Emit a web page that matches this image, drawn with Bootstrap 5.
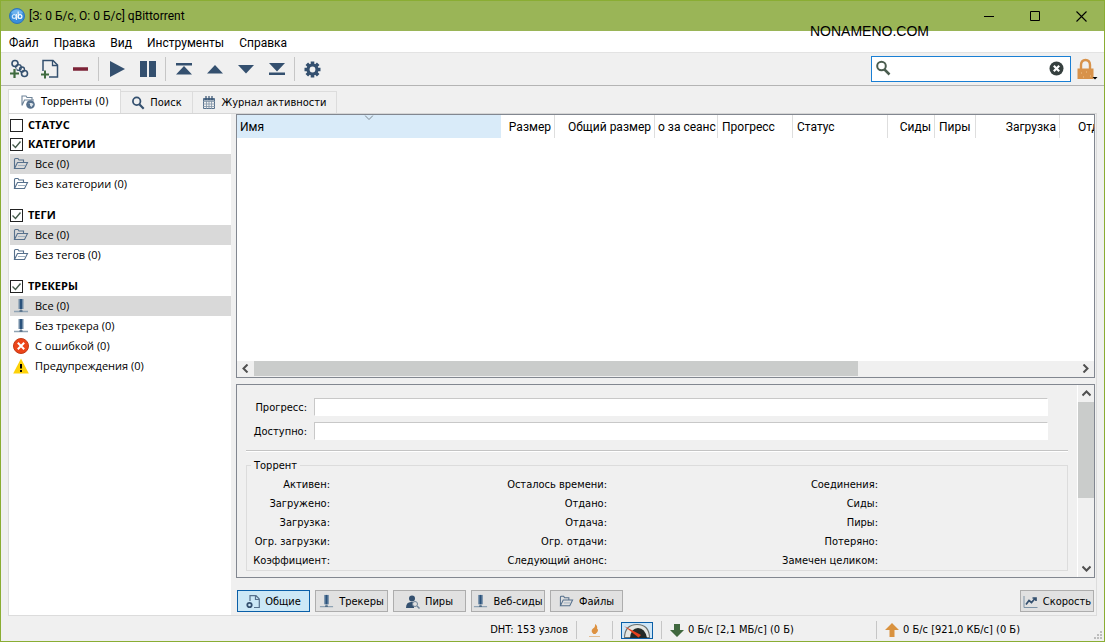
<!DOCTYPE html>
<html lang="ru">
<head>
<meta charset="utf-8">
<meta name="viewport" content="width=device-width, initial-scale=1">
<title>qBittorrent</title>
<link href="https://cdn.jsdelivr.net/npm/bootstrap@5.3.0/dist/css/bootstrap.min.css" rel="stylesheet">
<style>
:root{--face:#f0f0f0;--edge:#828790;--soft:#dcdcdc;--ink:#34506f;--ui:Roboto,"Noto Sans",sans-serif;--tah:"DejaVu Sans Condensed","DejaVu Sans",sans-serif}
body{background:var(--face);color:#000;font:11px/16px var(--tah);min-height:100vh}
.window{min-height:100vh;border:1px solid #8aad33;border-top:0}
svg{display:block;flex:none}
button{color:inherit;font:inherit}
.titlebar{background:#9ab557;height:31px;padding-left:8px;font:12px/16px var(--ui);border-top:1px solid #8aad33}
.titlebar h1{font:inherit;margin:0}
.wbtn{width:46px;height:30px;border:0;background:none;padding:0}
.watermark{top:22px;right:176px;font:14px/18px "Liberation Sans",sans-serif}
.menubar{background:#fff;height:21px;padding:2px 0 0 8px;gap:15px;font:12px/16px var(--ui)}
.menubar a,.tabs a{color:#000;text-decoration:none}
.toolbar{height:34px;border-top:1px solid #e3e3e3;border-bottom:1px solid #b4b4b4;padding:0 5px 0 7px}
.toolbar .vsep{margin:0 2px}
.tool{border:0;background:none;padding:0;width:31px;height:26px;display:flex;align-items:center;justify-content:center}
.tool.first{width:22px;margin-right:4px}
.tool.lock{width:24px}
.vsep{width:1px;height:24px;background:#c6c6c6}
.search{width:200px;height:26px}
.search input{width:100%;height:26px;border:1px solid #1a7fd4;background:#fff;padding:0 26px 0 26px;outline:0}
.search svg.mag{left:4px;top:4px}
.search button{right:7px;top:5px;border:0;background:none;padding:0}
.tabs{padding:4px 0 0 7px;height:27px}
.tabs a{height:22px;border:1px solid var(--soft);border-left:0;border-bottom:0;margin-top:1px;display:flex;align-items:center;justify-content:center;gap:5px;padding-top:1px}
.tabs a.current{background:#fff;border-left:1px solid var(--soft);height:24px;margin:-1px 0 -1px;position:relative}
.pagebox{border:1px solid var(--soft);border-top-color:#d6d6d6;margin:0 7px 0 7px}
.side{width:222px;background:#fff;padding:1px 0 0 1px;font:11px/16px "Open Sans","Noto Sans",sans-serif}
.side section{margin-bottom:11px}
.side section.tight{margin-bottom:-1px}
.side label{font:bold 11px/16px "Open Sans","Noto Sans",sans-serif;height:20px;gap:5px}
.side input{appearance:none;width:13px;height:13px;border:1px solid #222;background:#fff;margin:0}
.side input:checked{background:#fff url("data:image/svg+xml,%3Csvg xmlns='http://www.w3.org/2000/svg' viewBox='0 0 11 11'%3E%3Cpath d='M1.5 5.5l3 3 5-6' fill='none' stroke='%23445a4a' stroke-width='1.4'/%3E%3C/svg%3E")}
.side ul{margin:0}
.side li{height:20px;gap:6px;padding-left:3px}
.side li.sel{background:#d9d9d9}
.side li svg{width:16px;height:16px}
.work{padding:0 1px 1px 5px;min-width:0}
.pane{border:1px solid var(--edge)}
.list{background:#fff}
.list table{width:100%;table-layout:fixed;border-collapse:separate;border-spacing:0}
.list th{height:23px;padding:0 3px;font:12px/16px var(--ui);border-right:1px solid #dedede;overflow:hidden;white-space:nowrap;text-overflow:clip}
.list th.sorted{background:#d9ebf9;border-right-color:#d9ebf9;position:relative}
.list th.sorted svg{top:0;left:50%}
.list th.lead-l{padding-left:4px}
.list th.cut{padding:0 0 0 18px;border:0}
.sbtn{border:0;background:none;padding:0;width:17px;height:17px;display:flex;align-items:center;justify-content:center;flex:none}
.hbar{height:16px;background:var(--face);padding-bottom:1px}
.thumb{background:#cacccb}
.info{margin-top:6px}
.vbar{width:17px;border-left:1px solid #fff}
.detail{padding:13px 9px 6px 9px}
.meter{display:grid;grid-template-columns:61px 1fr;column-gap:7px;row-gap:6px;padding-right:20px}
.meter span{text-align:right;line-height:20px;height:18px}
.meter div{height:18px;background:#fff;border:1px solid #c8c8c8;border-right-color:#fff;border-bottom-color:#fff}
.rule{border-top:1px solid #c4c4c4;border-bottom:1px solid #fff;margin:10px 0 13px}
fieldset{border:1px solid var(--soft);padding:2px 10px 0 0;position:relative}
.facts{display:grid;grid-template-columns:83px 1fr 98px 1fr 92px 1fr;padding:7px 0 0}
.facts dt{font-weight:400;text-align:right;line-height:19px;white-space:nowrap;display:flex;justify-content:flex-end}
.facts dd{margin:0}
legend{position:absolute;top:-8px;left:4px;font:11px/16px var(--tah);background:var(--face);width:auto;padding:0 3px;margin:0;float:none}
.bottom{padding:12px 1px 2px;gap:5px}
.pbtn{width:73px;height:22px;border:1px solid #adadad;background:#e1e1e1;padding:1px 0 0;display:flex;align-items:center;justify-content:center;gap:5px;white-space:nowrap}
.pbtn.wide{width:74px}
.pbtn.on{background:#cce8f6;border-color:#0a5fa8}
.status{height:25px;gap:8px;padding-top:3px}
.status .vsep{height:18px}
.down{width:207px}.up{width:219px}
.gauge{border:1px solid #0a5fa8;background:#cfe6f7;width:32px;height:17px;padding:0}
.grip{right:2px;bottom:2px}
</style>
</head>
<body>
<svg class="d-none" xmlns="http://www.w3.org/2000/svg">
<symbol id="folder" viewBox="0 0 16 16"><path d="M1.500 12.500V3.500q0-1 1-1H5l1 1.500h4.500v2M1.500 12.500l3-6h10l-3 6z" fill="none" stroke="#56708c" stroke-width="1.100"/><path d="M5 9.500h7" stroke="#9fb0c0"/></symbol>
<symbol id="server" viewBox="0 0 16 16"><path d="M5.500 1h5v10h-5z" fill="#6f8aa5"/><path d="M7 1h2v10H7z" fill="#2a527c"/><path d="M8 11v2M1 13.500h14" stroke="#8fa3b4" stroke-width="1.400"/><path d="M6.500 13h3" stroke="#4b6680" stroke-width="1.500"/></symbol>
<symbol id="mag" viewBox="0 0 16 16"><circle cx="6.500" cy="6" r="4.300" fill="none" stroke="currentColor" stroke-width="2"/><path d="M9.500 9.500l5 5" stroke="currentColor" stroke-width="2.500"/></symbol>
</svg>

<div class="window d-flex flex-column">
<header class="titlebar d-flex align-items-center">
<svg width="16" height="16" viewBox="0 0 16 16"><circle cx="8" cy="8" r="7.500" fill="#3a8fdc" stroke="#2f74b8"/><path d="M2 5a7 7 0 0 1 12 0q-6 3-12 0" fill="#6db3ee"/><circle cx="5.200" cy="8.500" r="1.900" fill="none" stroke="#cfe6fa" stroke-width="1.200"/><path d="M7.400 6v6M9.200 3.500v7" stroke="#e8f4fd" stroke-width="1.200"/><circle cx="11" cy="8.500" r="1.900" fill="none" stroke="#fff" stroke-width="1.200"/></svg>
<h1 class="ms-1 flex-grow-1">[З: 0 Б/с, О: 0 Б/с] qBittorrent</h1>
<button class="wbtn" aria-label="Свернуть"><svg class="mx-auto" width="11" height="11"><path d="M0 5.500h10" stroke="#000"/></svg></button>
<button class="wbtn" aria-label="Развернуть"><svg class="mx-auto" width="11" height="11"><path d="M.5.5h9v9h-9z" fill="none" stroke="#000"/></svg></button>
<button class="wbtn" aria-label="Закрыть"><svg class="mx-auto" width="11" height="11"><path d="M.5.5l10 10m0-10l-10 10" stroke="#000" stroke-width="1.100"/></svg></button>
</header>
<div class="watermark position-absolute">NONAMENO.COM</div>
<nav class="menubar d-flex align-items-center"><a href="#">Файл</a><a href="#">Правка</a><a href="#">Вид</a><a href="#">Инструменты</a><a href="#">Справка</a></nav>

<div class="toolbar d-flex align-items-center">
<button class="tool first" aria-label="Добавить ссылку"><svg width="20" height="20" viewBox="0 0 20 20" fill="none" stroke="#34506f" stroke-width="1.600"><circle cx="6" cy="4.500" r="3"/><circle cx="9.500" cy="8.500" r="2.800" stroke-width="1.300"/><circle cx="15.500" cy="14.500" r="3"/><circle cx="13" cy="10.500" r="2.500" stroke-width="1.300"/><path d="M5.500 9.500v10M.5 14.500h10" stroke="#f0f0f0" stroke-width="4"/><path d="M5.500 10v9M1 14.500h9" stroke="#3f6b3f" stroke-width="2.200"/></svg></button>
<button class="tool" aria-label="Добавить файл"><svg width="20" height="20" viewBox="0 0 20 20" fill="none"><path d="M3 12V1.500h10l4.500 4.500v12H9" stroke="#34506f" stroke-width="1.500"/><path d="M12.500 1.500V6.500h5" stroke="#34506f" stroke-width="1.300"/><path d="M5 11.500v8M1 15.500h8" stroke="#3f6b3f" stroke-width="2"/></svg></button>
<button class="tool" aria-label="Удалить"><svg width="16" height="16"><path d="M0 8h15" stroke="#7c2337" stroke-width="3.500"/></svg></button>
<div class="vsep"></div>
<button class="tool" aria-label="Пуск"><svg width="16" height="16"><path d="M1 0l15 8-15 8z" fill="#34506f"/></svg></button>
<button class="tool" aria-label="Пауза"><svg width="16" height="16"><path d="M0 0h7v16H0zM9 0h7v16H9z" fill="#34506f"/></svg></button>
<div class="vsep"></div>
<button class="tool" aria-label="В начало"><svg width="16" height="12"><path d="M0 0h16v2.500H0zM8 3l8 8.500H0z" fill="#34506f"/></svg></button>
<button class="tool" aria-label="Выше"><svg width="16" height="9"><path d="M8 0l8 8.500H0z" fill="#34506f"/></svg></button>
<button class="tool" aria-label="Ниже"><svg width="16" height="9"><path d="M0 0h16L8 8.500z" fill="#34506f"/></svg></button>
<button class="tool" aria-label="В конец"><svg width="16" height="12"><path d="M0 0h16L8 8.500zM0 9.500h16V12H0z" fill="#34506f"/></svg></button>
<div class="vsep"></div>
<button class="tool" aria-label="Настройки"><svg width="17" height="17" viewBox="-8.500 -8.500 17 17"><g stroke="#34506f" stroke-width="3.600"><path d="M0-8V8M-8 0H8M-5.700-5.700L5.700 5.700M5.700-5.700L-5.700 5.700"/></g><circle r="6" fill="#34506f"/><circle r="2.900" fill="#f0f0f0"/></svg></button>
<div class="search position-relative ms-auto">
<svg class="mag position-absolute" style="color:#4b5d4f" width="16" height="16"><use href="#mag"/></svg>
<input type="text" aria-label="Поиск торрентов">
<button class="position-absolute" aria-label="Очистить"><svg width="15" height="15"><circle cx="7.500" cy="7.500" r="7" fill="#36403f"/><path d="M4.800 4.800l5.400 5.400m0-5.400l-5.400 5.400" stroke="#fff" stroke-width="2.200"/></svg></button>
</div>
<button class="tool lock ms-1" aria-label="Блокировка"><svg width="22" height="22"><path d="M5 12V7q0-5 4.500-5T14 7v5" fill="none" stroke="#d8924a" stroke-width="2.400"/><path d="M1.500 10.500h16v10.500h-16z" fill="#d8924a"/><path d="M5 15h1m4-1h1m3 4h1m-8 1h1" stroke="#f2c48d"/><path d="M16.500 19h5L19 21.500z"/></svg></button>
</div>

<nav class="tabs d-flex">
<a href="#" class="current" style="width:113px"><svg width="16" height="16" viewBox="0 0 16 16" fill="none"><path d="M2 11.500V2h4l1 1.500h5V6M2 11.500L4.500 6H14" stroke="#6f8499" stroke-width="1.100"/><circle cx="10.500" cy="10.500" r="4.300" fill="#56708c"/><path d="M8 9l2 .5v2l1.500 1.500 2-3-2-1" fill="#dfe6ec"/></svg>Торренты (0)</a>
<a href="#" style="width:72px"><svg width="14" height="14" viewBox="0 0 16 16" style="color:#34506f"><use href="#mag"/></svg>Поиск</a>
<a href="#" style="width:144px"><svg width="14" height="14" viewBox="0 0 14 14"><path d="M1.500 2.500h11v10h-11z" fill="none" stroke="#56708c"/><path d="M1 5.500h12M1 8h12M1 10.500h12M4.500 5v8M7 5v8M9.500 5v8" stroke="#7f93a6" stroke-width=".8"/><path d="M1.500 3.500h11" stroke="#56708c" stroke-width="2"/><path d="M4 0v4M7 0v4M10 0v4" stroke="#34506f" stroke-width="1.200"/></svg>Журнал активности</a>
</nav>

<main class="pagebox d-flex flex-grow-1">
<aside class="side flex-shrink-0">
<section class="tight"><label class="d-flex align-items-center"><input type="checkbox">СТАТУС</label></section>
<section><label class="d-flex align-items-center"><input type="checkbox" checked>КАТЕГОРИИ</label>
<ul class="list-unstyled"><li class="sel d-flex align-items-center"><svg><use href="#folder"/></svg>Все (0)</li><li class="d-flex align-items-center"><svg><use href="#folder"/></svg>Без категории (0)</li></ul></section>
<section><label class="d-flex align-items-center"><input type="checkbox" checked>ТЕГИ</label>
<ul class="list-unstyled"><li class="sel d-flex align-items-center"><svg><use href="#folder"/></svg>Все (0)</li><li class="d-flex align-items-center"><svg><use href="#folder"/></svg>Без тегов (0)</li></ul></section>
<section><label class="d-flex align-items-center"><input type="checkbox" checked>ТРЕКЕРЫ</label>
<ul class="list-unstyled"><li class="sel d-flex align-items-center"><svg><use href="#server"/></svg>Все (0)</li><li class="d-flex align-items-center"><svg><use href="#server"/></svg>Без трекера (0)</li>
<li class="d-flex align-items-center"><svg viewBox="0 0 16 16"><circle cx="8" cy="8" r="7.500" fill="#ec4419" stroke="#c23a17"/><path d="M4.800 4.800l6.400 6.400m0-6.400l-6.400 6.400" stroke="#fff" stroke-width="2"/></svg>С ошибкой (0)</li>
<li class="d-flex align-items-center"><svg viewBox="0 0 16 16"><path d="M8 .5L15.800 15.500H.2z" fill="#fdd20a"/><path d="M8 6v4.500M8 12v2" stroke="#000" stroke-width="2"/></svg>Предупреждения (0)</li></ul></section>
</aside>

<div class="work d-flex flex-column flex-grow-1">
<section class="pane list d-flex flex-column flex-grow-1">
<table>
<colgroup><col><col style="width:54px"><col style="width:100px"><col style="width:63px"><col style="width:75px"><col style="width:95px"><col style="width:47px"><col style="width:41px"><col style="width:84px"><col style="width:34px"></colgroup>
<thead><tr><th class="sorted">Имя<svg class="position-absolute translate-middle-x" width="9" height="5"><path d="M.5.5l4 4 4-4" fill="none" stroke="#7d8790"/></svg></th><th class="text-end">Размер</th><th class="text-end">Общий размер</th><th class="text-end">о за сеанс</th><th class="lead-l">Прогресс</th><th class="lead-l">Статус</th><th class="text-end">Сиды</th><th class="lead-l">Пиры</th><th class="text-end">Загрузка</th><th class="cut">Отд</th></tr></thead>
</table>
<div class="hbar d-flex mt-auto align-items-stretch">
<button class="sbtn h-100" aria-label="Влево"><svg width="7" height="9"><path d="M5.500.5l-4 4 4 4" fill="none" stroke="#505050" stroke-width="2"/></svg></button>
<div class="flex-grow-1"><div class="thumb h-100" style="width:73.4%"></div></div>
<button class="sbtn h-100" aria-label="Вправо"><svg width="7" height="9"><path d="M1.500.5l4 4-4 4" fill="none" stroke="#505050" stroke-width="2"/></svg></button>
</div>
</section>

<section class="pane info d-flex">
<div class="detail flex-grow-1">
<div class="meter"><span>Прогресс:</span><div></div><span>Доступно:</span><div></div></div>
<div class="rule"></div>
<fieldset><legend>Торрент</legend>
<dl class="facts m-0">
<dt>Активен:</dt><dd></dd><dt>Осталось времени:</dt><dd></dd><dt>Соединения:</dt><dd></dd>
<dt>Загружено:</dt><dd></dd><dt>Отдано:</dt><dd></dd><dt>Сиды:</dt><dd></dd>
<dt>Загрузка:</dt><dd></dd><dt>Отдача:</dt><dd></dd><dt>Пиры:</dt><dd></dd>
<dt>Огр. загрузки:</dt><dd></dd><dt>Огр. отдачи:</dt><dd></dd><dt>Потеряно:</dt><dd></dd>
<dt>Коэффициент:</dt><dd></dd><dt>Следующий анонс:</dt><dd></dd><dt>Замечен целиком:</dt><dd></dd>
</dl></fieldset>
</div>
<div class="vbar d-flex flex-column">
<button class="sbtn" aria-label="Вверх"><svg width="9" height="7"><path d="M.5 5.500l4-4 4 4" fill="none" stroke="#505050" stroke-width="2"/></svg></button>
<div class="flex-grow-1"><div class="thumb" style="height:61%"></div></div>
<button class="sbtn" aria-label="Вниз"><svg width="9" height="7"><path d="M.5 1.500l4 4 4-4" fill="none" stroke="#505050" stroke-width="2"/></svg></button>
</div>
</section>

<div class="bottom d-flex">
<button class="pbtn on"><svg width="14" height="14" viewBox="0 0 14 14" fill="none"><path d="M4 6V.7h6l3.300 3.300v8.500H8M9.500 1v3.500h4" stroke="#56708c" stroke-width="1.200"/><circle cx="3.500" cy="10" r="2.200" stroke="#34506f" stroke-width="1.800"/></svg>Общие</button>
<button class="pbtn"><svg width="15" height="15"><use href="#server"/></svg>Трекеры</button>
<button class="pbtn"><svg width="14" height="14" viewBox="0 0 14 14"><circle cx="6" cy="3.500" r="3" fill="#34506f"/><path d="M0 13q0-6 5-6h3v6z" fill="#34506f"/><circle cx="9" cy="9" r="2.500" fill="#e1e1e1" stroke="#6f8499"/><path d="M11 11l2.500 2.500" stroke="#6f8499" stroke-width="1.400"/></svg>Пиры</button>
<button class="pbtn wide"><svg width="15" height="15"><use href="#server"/></svg>Веб-сиды</button>
<button class="pbtn"><svg width="15" height="15"><use href="#folder"/></svg>Файлы</button>
<button class="pbtn wide ms-auto"><svg width="15" height="14" viewBox="0 0 15 14" fill="none"><path d="M1 1v11.500h13.500" stroke="#7d93a6"/><path d="M3 9.500l3-4 2.500 2L12 3.500M9.500 3H13v3" stroke="#34506f" stroke-width="1.700"/></svg>Скорость</button>
</div>
</div>
</main>

<footer class="status d-flex align-items-center justify-content-end position-relative">
<span>DHT: 153 узлов</span><div class="vsep"></div>
<svg class="mx-1" width="11" height="15"><path d="M4.500 11Q1 8 4 5.500 6.500 4 6 1q3 2 2 4.500Q10 7 8 9.500q-1 .5-1.500 1.500z" fill="#dd9140"/><path d="M0 13.500h11" stroke="#e2bd92"/></svg>
<div class="vsep"></div>
<button class="gauge" aria-label="Ограничение скорости"><svg width="30" height="15"><path d="M2 15Q2 1 15 1T28 15z" fill="#6b706d"/><path d="M3 14Q4 2 15 2T27 14z" fill="#e4e6e2"/><path d="M8 15Q9 5 16 5T25 15z" fill="#252b28"/><path d="M2 3l17 9-2.500 2.500z" fill="#e8401c"/></svg></button>
<div class="vsep"></div>
<div class="down d-flex align-items-center gap-1"><svg width="14" height="15"><path d="M4 1h6v6h4l-7 7-7-7h4z" fill="#40683f"/></svg>0 Б/с [2,1 МБ/с] (0 Б)<div class="vsep ms-auto"></div></div>
<div class="up d-flex align-items-center gap-1"><svg width="14" height="15"><path d="M7 0l7 7h-4.500v7h-5V7H0z" fill="#d9923f"/></svg>0 Б/с [921,0 КБ/с] (0 Б)</div>
<svg class="grip position-absolute" width="8" height="8" fill="#bdbdbd"><path d="M6 0h2v2H6zM6 3h2v2H6zM6 6h2v2H6zM3 3h2v2H3zM3 6h2v2H3zM0 6h2v2H0z"/></svg>
</footer>
</div>
<script src="https://cdn.jsdelivr.net/npm/bootstrap@5.3.0/dist/js/bootstrap.bundle.min.js"></script>
</body>
</html>
